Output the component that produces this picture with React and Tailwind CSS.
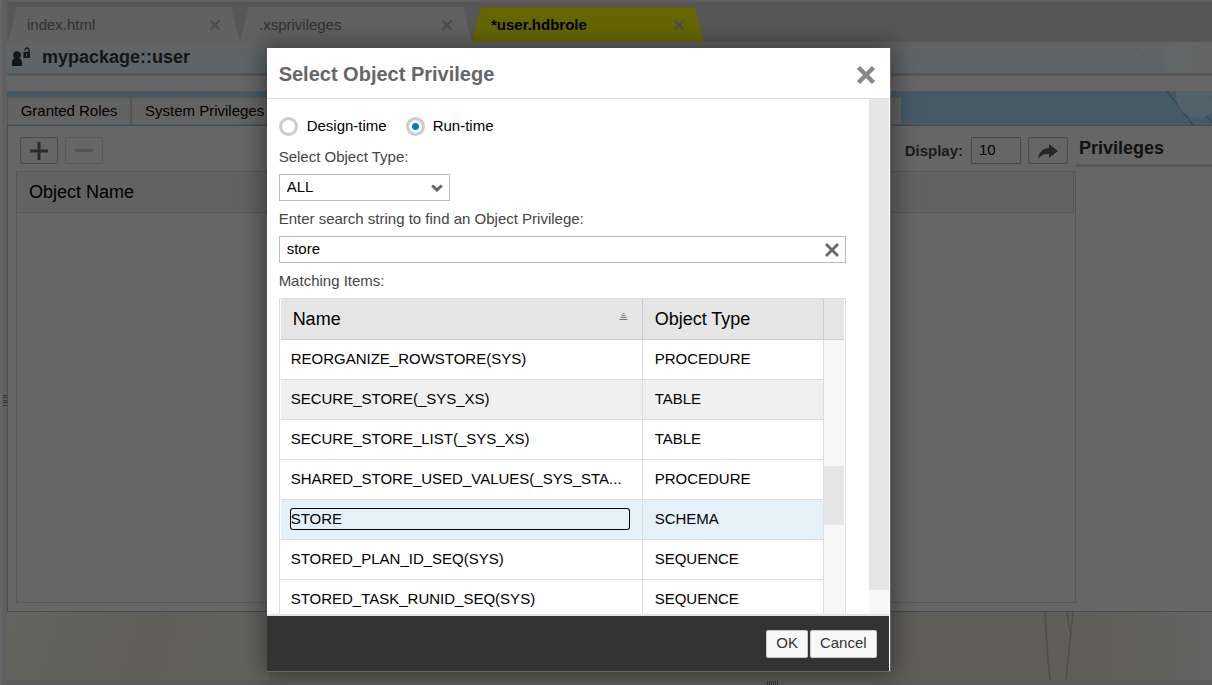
import React, { useState } from "react";

const items = [
  ["REORGANIZE_ROWSTORE(SYS)", "PROCEDURE"],
  ["SECURE_STORE(_SYS_XS)", "TABLE"],
  ["SECURE_STORE_LIST(_SYS_XS)", "TABLE"],
  ["SHARED_STORE_USED_VALUES(_SYS_STA...", "PROCEDURE"],
  ["STORE", "SCHEMA"],
  ["STORED_PLAN_ID_SEQ(SYS)", "SEQUENCE"],
  ["STORED_TASK_RUNID_SEQ(SYS)", "SEQUENCE"],
];

function Cross({ className, width = 3 }) {
  return (
    <svg viewBox="0 0 16 16" className={className} fill="none" stroke="currentColor" strokeWidth={width} aria-hidden="true">
      <path d="M2 2 L14 14 M14 2 L2 14" />
    </svg>
  );
}

function FileTab({ name, active }) {
  return (
    <div
      className={
        "flex h-[35px] w-[232px] shrink-0 items-center justify-between px-[19px] [clip-path:polygon(9px_0,calc(100%-9px)_0,100%_100%,0_100%)] " +
        (active ? "bg-[#666600] font-bold text-black" : "bg-[#616161] text-[#303030]")
      }
    >
      <span className="pt-px">{name}</span>
      <button type="button" aria-label={"Close " + name} className="text-[#4e4e4e]">
        <Cross className="size-3" />
      </button>
    </div>
  );
}

function Editor() {
  return (
    <div className="flex min-h-screen bg-[#5f5f5f] text-[15px]">
      <div className="flex w-[7px] shrink-0 items-center justify-end border-l-2 border-[#666] pt-[115px]">
        <svg viewBox="0 0 4 11" className="h-[11px] w-1" stroke="#333" aria-hidden="true">
          <path d="M0 .5H4M0 2.500H4M0 5.500H4M0 7.500H4M0 10.500H4" />
        </svg>
      </div>
      <div className="flex min-w-0 flex-1 flex-col">
        <div className="flex h-[42px] items-end overflow-hidden border-t-2 border-[#606060] bg-[#575757] pl-px">
          <FileTab name="index.html" />
          <FileTab name=".xsprivileges" />
          <FileTab name="*user.hdbrole" active />
        </div>
        <div className="relative flex h-[34px] items-center overflow-hidden border-b-[3px] border-[#555] bg-linear-to-b from-[#616465] to-[#5c6569] pl-1">
          <svg viewBox="0 0 20 20" className="mb-[2px] size-5 shrink-0 text-[#151515]" fill="currentColor" aria-hidden="true">
            <circle cx="6" cy="8" r="3.800" />
            <path d="M1 19v-3.500c0-2.500 1.500-4 3-4.500h4c1.500.5 3 2 3 4.500V19z" />
            <path d="M12.500 5h6.500v6h-6.500z" />
            <path d="M14 3.500V3a2 2 0 0 1 4 0V5" fill="none" stroke="currentColor" strokeWidth="1.300" />
            <path d="M15.200 6.500h1v3h-1z" fill="#666" />
          </svg>
          <h1 className="ml-[11px] pb-[2px] text-lg leading-none font-bold text-[#151515]">mypackage::user</h1>
          <svg viewBox="0 0 80 31" className="absolute top-0 right-0 h-[31px] w-20" aria-hidden="true">
            <path d="M0 0L25 31" stroke="#5a6063" />
            <circle cx="55" cy="17" r="23" fill="#636768" />
            <circle cx="72" cy="17" r="15" fill="#646565" />
          </svg>
        </div>
        <div className="h-[15px] bg-[#666]" />
        <div className="relative flex h-[35px] items-end overflow-hidden border-b border-[#454d52] bg-[#465a66]">
          <svg viewBox="0 0 50 34" className="absolute top-0 right-0 h-[34px] w-[50px]" aria-hidden="true">
            <path d="M5 0L31 34M42 0L50 12M44 24L50 32" stroke="#34454f" strokeWidth="1.200" />
            <circle cx="36" cy="5" r="22" fill="#56636b" opacity=".8" />
          </svg>
          <div role="tablist" className="relative mb-px flex h-[27px] w-[895px] border border-b-0 border-[#555] bg-[#636363] text-black">
            <button type="button" role="tab" className="w-[124px] border-r-2 border-[#555] text-center">Granted Roles</button>
            <button type="button" role="tab" className="px-[13px]">System Privileges</button>
          </div>
        </div>
        <div className="flex flex-1 border-b border-l border-[#4b4b4b] bg-[#666] pb-2">
          <section className="flex w-[1068px] shrink-0 flex-col pt-[11px] pl-2">
            <div className="flex h-[27px] items-stretch pl-1">
              <button type="button" aria-label="Add" className="flex w-[38px] items-center justify-center rounded-xs border border-[#4d4d4d] text-[#2b2b2b]">
                <svg viewBox="0 0 20 20" className="size-5" stroke="currentColor" strokeWidth="3" aria-hidden="true"><path d="M10 1V19M1 10H19" /></svg>
              </button>
              <button type="button" aria-label="Remove" className="ml-[7px] flex w-[38px] items-center justify-center rounded-xs border border-[#5a5a5a] text-[#535353]">
                <svg viewBox="0 0 20 20" className="size-5" stroke="currentColor" strokeWidth="3" aria-hidden="true"><path d="M1 9.500H19" /></svg>
              </button>
              <label htmlFor="display" className="ml-auto self-center pt-px font-bold text-[#1b1b1b]">Display:</label>
              <input id="display" defaultValue="10" className="ml-2 w-[50px] border border-[#484848] bg-transparent px-[7px] text-black" />
              <button type="button" aria-label="Apply" className="mr-2 ml-[7px] flex w-10 items-center justify-center rounded-xs border border-[#4d4d4d] text-[#262626]">
                <svg viewBox="0 0 22 18" className="h-[18px] w-[22px]" fill="currentColor" aria-hidden="true"><path d="M12 2L21 9L12 16V12C7 11.500 4 13 1 17C2 10 6 6 12 6Z" /></svg>
              </button>
            </div>
            <div className="mt-[7px] flex-1 border border-[#575757]">
              <div className="mr-px flex h-[41px] items-center border-r border-b border-[#575757] bg-[#626262] pl-3 text-lg text-black">Object Name</div>
            </div>
          </section>
          <section className="min-w-0 flex-1 pt-[11px]">
            <h2 className="h-[30px] border-b-[3px] border-[#585858] pl-[3px] text-lg leading-[22px] font-bold text-[#111]">Privileges</h2>
          </section>
        </div>
        <div className="h-[68px] overflow-hidden bg-[#5f5e59]">
          <svg viewBox="0 0 1205 68" preserveAspectRatio="xMaxYMin slice" className="h-[68px] w-full" aria-hidden="true">
            <defs>
              <linearGradient id="left" gradientUnits="userSpaceOnUse" x1="0" y1="0" x2="280" y2="90">
                <stop offset="0" stopColor="#646461" />
                <stop offset=".5" stopColor="#5f5e59" />
                <stop offset="1" stopColor="#646461" />
              </linearGradient>
              <linearGradient id="right">
                <stop offset="0" stopColor="#646461" stopOpacity="0" />
                <stop offset="1" stopColor="#646464" />
              </linearGradient>
            </defs>
            <rect width="262" height="68" fill="url(#left)" />
            <rect x="1090" width="115" height="68" fill="url(#right)" />
            <path d="M1038 0Q1040 40 1043 68M1060 0L1063 20M1066 0Q1063 30 1059 68" fill="none" stroke="#4f4e4b" strokeWidth="1.500" />
          </svg>
        </div>
        <div className="flex h-[5px] items-end justify-center bg-[#5d5d5d] pl-[325px]">
          <svg viewBox="0 0 11 4" className="h-1 w-[11px]" stroke="#333" aria-hidden="true">
            <path d="M.5 0V4M2.500 0V4M4.500 0V4M6.500 0V4M8.500 0V4M10.500 0V4" />
          </svg>
        </div>
      </div>
    </div>
  );
}

function Dialog() {
  const [mode, setMode] = useState("run");
  const radio =
    "mb-px size-[19px] appearance-none rounded-full border-[3px] border-[#ccc] bg-white checked:bg-[radial-gradient(circle,#007cc0_3px,transparent_4px)]";
  return (
    <div className="absolute inset-0 flex pt-12 pb-[13px] pl-[22%]">
      <div
        role="dialog"
        aria-labelledby="dialog-title"
        className="flex w-[624px] flex-col border-r border-b border-[#666] bg-white text-[15px] text-black shadow-[0_0_22px_4px_rgba(0,0,0,0.4)]"
      >
        <header className="flex h-[51px] shrink-0 items-center justify-between border-b border-[#ddd] pr-[14px] pl-3">
          <h2 id="dialog-title" className="pt-[2px] text-xl font-bold text-[#666]">Select Object Privilege</h2>
          <button type="button" aria-label="Close" className="mt-1 text-[#888]"><Cross className="size-5" width={3.6} /></button>
        </header>
        <div className="mr-px flex min-h-0 flex-1 border-b-2 border-[#e5e5e5]">
          <div className="flex min-h-0 flex-1 flex-col overflow-hidden pt-4 pr-[23px] pl-3 text-[#444]">
            <div className="flex h-6 shrink-0 items-center text-black">
              <input id="design" type="radio" name="mode" checked={mode === "design"} onChange={() => setMode("design")} className={radio} />
              <label htmlFor="design" className="ml-[9px] pb-px">Design-time</label>
              <input id="run" type="radio" name="mode" checked={mode === "run"} onChange={() => setMode("run")} className={"ml-[19px] " + radio} />
              <label htmlFor="run" className="ml-2 pb-px">Run-time</label>
            </div>
            <label htmlFor="type" className="mt-2 leading-5">Select Object Type:</label>
            <div className="relative mt-[7px] h-[27px] w-[171px] shrink-0">
              <select id="type" className="size-full appearance-none border border-[#bbb] bg-white pl-[7px] text-black">
                <option>ALL</option>
              </select>
              <svg viewBox="0 0 12 8" className="pointer-events-none absolute top-[10px] right-[7px] h-2 w-3" fill="none" stroke="#666" strokeWidth="3" aria-hidden="true"><path d="M1.200 1.500L6 6L10.800 1.500" /></svg>
            </div>
            <label htmlFor="search" className="mt-2 leading-5">Enter search string to find an Object Privilege:</label>
            <div className="mt-[7px] flex h-[27px] shrink-0 border border-[#bbb]">
              <input id="search" defaultValue="store" className="min-w-0 flex-1 pb-px pl-[7px] text-black outline-none" />
              <button type="button" aria-label="Clear" className="px-[5px] text-[#666]"><Cross className="size-4" width={2.8} /></button>
            </div>
            <p className="mt-2 shrink-0 leading-5">Matching Items:</p>
            <div className="mt-[7px] flex min-h-0 flex-1 overflow-hidden border border-b-0 border-[#ddd] px-px text-black">
              <div className="min-h-0 min-w-0 flex-1 overflow-hidden">
                <table className="w-full table-fixed border-separate border-spacing-0 text-left">
                  <thead>
                    <tr className="h-[41px] bg-[#e5e5e5] text-lg">
                      <th className="w-[362px] border-r border-b border-[#ccc] py-0 pr-[14px] pl-3 font-normal">
                        <div className="flex items-center justify-between">
                          Name
                          <svg viewBox="0 0 9 8" className="mb-[5px] h-2 w-[9px]" stroke="#777" aria-hidden="true"><path d="M3.500 .5H5.500M2.500 2.500H6.500M1.500 4.500H7.500M.5 6.500H8.500" /></svg>
                        </div>
                      </th>
                      <th className="border-r border-b border-[#ccc] py-0 pl-3 font-normal">Object Type</th>
                    </tr>
                  </thead>
                  <tbody>
                    {items.map(([name, type], i) => (
                      <tr key={name} className={"h-10 " + (i === 4 ? "bg-[#e5f1f9]" : i === 1 ? "bg-[#f0f0f0]" : "bg-white")}>
                        <td className="border-r border-b border-[#ddd] pt-0 pr-[13px] pb-[2px] pl-[10px]">
                          <div
                            tabIndex={i === 4 ? 0 : -1}
                            className={"truncate leading-5 " + (i === 4 ? "rounded-xs ring-1 ring-black outline-none" : "")}
                          >
                            {name}
                          </div>
                        </td>
                        <td className="border-r border-b border-[#ddd] py-0 pl-3">{type}</td>
                      </tr>
                    ))}
                  </tbody>
                </table>
              </div>
              <div className="flex w-5 shrink-0 flex-col bg-[#f7f7f7]">
                <div className="h-[41px] border-b border-[#ccc] bg-[#e5e5e5]" />
                <div className="mt-[126px] h-[59px] bg-[#e5e5e5]" />
              </div>
            </div>
          </div>
          <div className="w-5 shrink-0 bg-[#f7f7f7] pb-6"><div className="h-full bg-[#e5e5e5]" /></div>
        </div>
        <footer className="mr-px flex h-[55px] shrink-0 items-center justify-end gap-[2px] bg-[#333] pr-3 text-[#333]">
          <button type="button" className="h-7 rounded-xs border border-[#ccc] bg-[#f7f7f7] px-[9px]">OK</button>
          <button type="button" className="h-7 rounded-xs border border-[#ccc] bg-[#f7f7f7] px-[9px]">Cancel</button>
        </footer>
      </div>
    </div>
  );
}

export default function App() {
  return (
    <main className="relative min-h-screen font-['Liberation_Sans',Arial,sans-serif]">
      <Editor />
      <Dialog />
    </main>
  );
}
